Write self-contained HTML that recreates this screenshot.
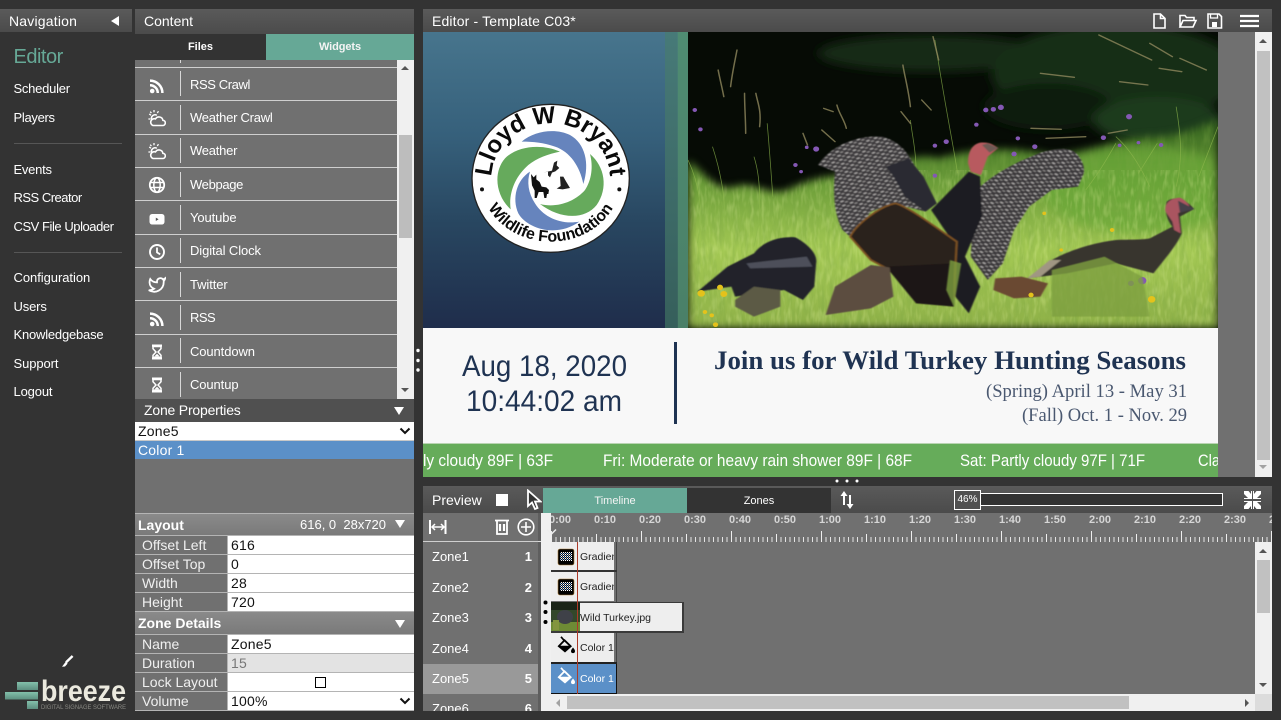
<!DOCTYPE html>
<html><head><meta charset="utf-8"><title>Editor</title>
<style>
html,body{margin:0;padding:0;width:1281px;height:720px;overflow:hidden;background:#333;font-family:"Liberation Sans",sans-serif;color:#fff}
div,span,svg{position:absolute;display:block}
svg text{font-family:"Liberation Sans",sans-serif}
.t{white-space:nowrap;line-height:18px;height:18px}
.hd{background:linear-gradient(#5a5a5a,#4b4b4b);font-size:14px;line-height:23px}
.nav{left:13.5px;font-size:13px;line-height:16px;height:16px;white-space:nowrap;color:#fff;letter-spacing:-.15px}
.ln{left:14px;width:108px;height:1px;background:#565656}
.row{left:135px;width:262px;height:33px;background:#707070;border-bottom:1px solid #cfcfcf;box-sizing:border-box}
.vd{left:180px;width:1px;height:25px;background:#d8d8d8}
.wt{left:190px;font-size:13px;line-height:16px;height:16px;white-space:nowrap;letter-spacing:-.1px}
.ic{left:148px;width:18px;height:18px}
.lb{left:135px;width:92px;height:18px;background:#707070;font-size:14px;line-height:18px;padding-left:7px;box-sizing:border-box;color:#f0f0f0}
.vl{left:228px;width:186px;height:18px;background:#fff;color:#111;font-size:14px;line-height:18px;padding-left:3px;box-sizing:border-box;letter-spacing:.2px}
.z{left:423px;width:115px;height:30px;font-size:13px;line-height:30px;padding-left:9px;box-sizing:border-box;background:#707070}
.z b{position:absolute;right:6px;top:0;font-size:13px}
.bk{left:551px;height:29px;background:#eee;overflow:hidden;color:#222;font-size:10.5px;line-height:29px}
.bk span{white-space:nowrap}
</style></head><body>

<svg width="0" height="0" style="left:0;top:0">
<defs>
<symbol id="rss" viewBox="0 0 18 18"><circle cx="4.2" cy="14" r="2.3" fill="#fff"/><path d="M2 8.2a7.800 7.800 0 0 1 7.800 7.800M2 3.600A12.400 12.400 0 0 1 14.400 16" fill="none" stroke="#fff" stroke-width="2.500"/></symbol>
<symbol id="wx" viewBox="0 0 18 18"><path d="M5 16.500h9.500a2.600 2.600 0 0 0 .4-5.200 4 4 0 0 0-7.400-1.400 3.400 3.400 0 0 0-2.500 6.600z" fill="none" stroke="#fff" stroke-width="1.600"/><path d="M3.600 10.500a3.600 3.600 0 0 1 5.200-4.200" fill="none" stroke="#fff" stroke-width="1.500"/><path d="M6 1v2.200M1.200 5l1.800 1.200M.4 10h2M10.500 2.200 9.300 4M2.200 2.600l1.200 1.500" stroke="#fff" stroke-width="1.300"/></symbol>
<symbol id="gl" viewBox="0 0 18 18"><circle cx="9" cy="9" r="7.200" fill="none" stroke="#fff" stroke-width="1.800"/><ellipse cx="9" cy="9" rx="3.200" ry="7.200" fill="none" stroke="#fff" stroke-width="1.500"/><path d="M2 6.500h14M2 11.500h14" stroke="#fff" stroke-width="1.500"/></symbol>
<symbol id="yt" viewBox="0 0 18 18"><rect x="1.500" y="4" width="15" height="10.500" rx="2.600" fill="#fff"/><path d="M7.800 7.600v3.400l2.800-1.700z" fill="#555"/></symbol>
<symbol id="ck" viewBox="0 0 18 18"><circle cx="9" cy="9" r="7" fill="none" stroke="#fff" stroke-width="1.900"/><path d="M9 4.500V9.400l3.200 2" fill="none" stroke="#fff" stroke-width="1.800"/></symbol>
<symbol id="tw" viewBox="0 0 24 24"><path d="M23 3a10.900 10.900 0 0 1-3 1.600A4.500 4.500 0 0 0 12 7.500v1A10.700 10.700 0 0 1 3 4s-4 9 5 13a11.600 11.600 0 0 1-7 2c9 5 20 0 20-11.500a4.500 4.500 0 0 0-.08-.83A7.700 7.700 0 0 0 23 3z" fill="none" stroke="#fff" stroke-width="2.400"/></symbol>
<symbol id="hg" viewBox="0 0 18 18"><path d="M4 1.500h10v2.200H4zM4 14.300h10v2.200H4z" fill="#fff"/><path d="M5 3.500v2.200L8 9l-3 3.300v2.200h8v-2.200L10 9l3-3.300V3.500z" fill="none" stroke="#fff" stroke-width="1.500"/><path d="M6 13.800 9 10.800l3 3z" fill="#fff"/></symbol>
<symbol id="bkt" viewBox="0 0 20 20"><path fill-rule="evenodd" d="M8.500 3 16 10.300 9 16.500 1.500 10.200zM8.500 5.600 4.400 9.800H12.800z" fill="currentColor"/><path d="M5 .8 8.600 5" stroke="currentColor" stroke-width="1.700" fill="none"/><path d="M17 11.500c1.300 1.700 2 2.600 2 3.600a2 2 0 0 1-4 0c0-1 .8-1.900 2-3.600z" fill="currentColor"/></symbol>
<pattern id="dth" patternUnits="userSpaceOnUse" width="2" height="2"><rect width="2" height="2" fill="#111"/><rect width="1" height="1" fill="#fff"/><rect x="1" y="1" width="1" height="1" fill="#7fa8e0"/></pattern>
<symbol id="grd" viewBox="0 0 18 18"><rect x="1" y="1" width="16" height="16" rx="2" fill="#000" stroke="#a97b35" stroke-width=".6"/><rect x="3" y="4" width="12" height="9" fill="url(#dth)"/></symbol>
<pattern id="wing" patternUnits="userSpaceOnUse" width="22" height="13" patternTransform="rotate(-22)"><rect width="22" height="13" fill="#3c3a3c"/><rect x="1" y="2" width="9" height="4" fill="#b3b0ae"/><rect x="12" y="8" width="8" height="3" fill="#a7a4a2"/></pattern>
<pattern id="wing2" patternUnits="userSpaceOnUse" width="22" height="13" patternTransform="rotate(28)"><rect width="22" height="13" fill="#3a383a"/><rect x="1" y="2" width="9" height="4" fill="#b7b4b2"/><rect x="12" y="8" width="8" height="3" fill="#a09d9b"/></pattern>
<pattern id="tk" patternUnits="userSpaceOnUse" x="551" y="531" width="4.500" height="11"><rect x="0" y="6" width="1" height="5" fill="#e4e4e4"/></pattern>
<pattern id="tk2" patternUnits="userSpaceOnUse" x="551" y="531" width="45" height="11"><rect x="0" y="3" width="1" height="8" fill="#eee"/></pattern>
<pattern id="tk3" patternUnits="userSpaceOnUse" x="551" y="531" width="90" height="11"><rect x="0" y="0" width="1" height="11" fill="#eee"/></pattern>
<filter id="noise" x="0" y="0" width="100%" height="100%"><feTurbulence type="fractalNoise" baseFrequency=".07 .014" numOctaves="3" seed="4"/><feColorMatrix values="0 0 0 0 .2  0 0 0 0 .38  0 0 0 0 .06  1.900 0 0 0 -.7"/></filter>
<filter id="noise2" x="0" y="0" width="100%" height="100%"><feTurbulence type="fractalNoise" baseFrequency=".1 .025" numOctaves="2" seed="9"/><feColorMatrix values="0 0 0 0 .78  0 0 0 0 .9  0 0 0 0 .35  1.800 0 0 0 -.8"/></filter>
<filter id="b1"><feGaussianBlur stdDeviation="1.800"/></filter>
<filter id="b2"><feGaussianBlur stdDeviation="14"/></filter>
<filter id="b3"><feGaussianBlur stdDeviation="12"/></filter>
</defs></svg>

<!-- NAVIGATION -->
<div class="hd" style="left:0;top:9px;width:132px;height:23px"><span class="t" style="left:9px;top:3px;letter-spacing:.2px">Navigation</span></div>
<svg style="left:111px;top:16px" width="9" height="10"><path d="M8 0v10L0 5z" fill="#fff"/></svg>
<div class="nav" style="top:45px;height:24px;line-height:24px;font-size:20px;color:#66a896;letter-spacing:-.5px">Editor</div>
<div class="nav" style="top:81px;letter-spacing:-.25px">Scheduler</div>
<div class="nav" style="top:110px;letter-spacing:-.3px">Players</div>
<div class="ln" style="top:143px"></div>
<div class="nav" style="top:162px;letter-spacing:-.25px">Events</div>
<div class="nav" style="top:190px;letter-spacing:-.5px">RSS Creator</div>
<div class="nav" style="top:219px;letter-spacing:-.45px">CSV File Uploader</div>
<div class="ln" style="top:252px"></div>
<div class="nav" style="top:270px;letter-spacing:-.05px">Configuration</div>
<div class="nav" style="top:299px">Users</div>
<div class="nav" style="top:327px;letter-spacing:-.2px">Knowledgebase</div>
<div class="nav" style="top:356px;letter-spacing:-.1px">Support</div>
<div class="nav" style="top:384px">Logout</div>
<svg style="left:60px;top:655px" width="14" height="13"><path d="M12.600 1 6 7.400" stroke="#fff" stroke-width="2.400"/><path d="M5.800 6.600 7.600 8.600 5 11.500 2 11.800z" fill="#fff"/></svg>
<svg style="left:0;top:675px" width="135" height="40" viewBox="0 675 135 40">
<defs><linearGradient id="lg" x1="0" y1="0" x2="0" y2="1"><stop offset="0" stop-color="#83c0ab"/><stop offset="1" stop-color="#5d8f80"/></linearGradient></defs>
<rect x="17" y="682" width="21" height="8" fill="url(#lg)"/><rect x="5" y="692" width="33" height="7.500" fill="url(#lg)"/><rect x="27" y="701" width="11" height="8" fill="url(#lg)"/>
<text x="41" y="701" font-size="30" font-weight="bold" fill="#ebe9de" textLength="85" lengthAdjust="spacingAndGlyphs">breeze</text>
<text x="41" y="709" font-size="6.500" fill="#8a8a84" textLength="85" lengthAdjust="spacingAndGlyphs">DIGITAL SIGNAGE SOFTWARE</text>
</svg>

<!-- CONTENT -->
<div class="hd" style="left:135px;top:9px;width:279px;height:25px"><span class="t" style="left:9px;top:3px">Content</span></div>
<div style="left:135px;top:34px;width:131px;height:26px;background:#333;font-size:11px;font-weight:bold;line-height:26px;text-align:center">Files</div>
<div style="left:266px;top:34px;width:148px;height:26px;background:#66a896;font-size:11px;font-weight:bold;line-height:26px;text-align:center;color:#f4f4f4;letter-spacing:-.1px">Widgets</div>

<div style="left:135px;top:60px;width:262px;height:339px;background:#707070"></div>
<div class="row" style="top:60px;height:8px"></div>
<div class="vd" style="top:60px;height:3px"></div>
<div class="row" style="top:68px"></div><div class="row" style="top:101px;height:34px"></div><div class="row" style="top:135px"></div><div class="row" style="top:168px"></div><div class="row" style="top:201px;height:34px"></div><div class="row" style="top:235px"></div><div class="row" style="top:268px"></div><div class="row" style="top:301px;height:34px"></div><div class="row" style="top:335px"></div>
<div class="vd" style="top:71px"></div><div class="vd" style="top:105px"></div><div class="vd" style="top:138px"></div><div class="vd" style="top:172px"></div><div class="vd" style="top:205px"></div><div class="vd" style="top:238px"></div><div class="vd" style="top:272px"></div><div class="vd" style="top:305px"></div><div class="vd" style="top:338px"></div><div class="vd" style="top:372px"></div>
<svg class="ic" style="top:77px"><use href="#rss"/></svg><div class="wt" style="top:77px;letter-spacing:-.4px">RSS Crawl</div>
<svg class="ic" style="top:109px"><use href="#wx"/></svg><div class="wt" style="top:110px;letter-spacing:-.25px">Weather Crawl</div>
<svg class="ic" style="top:142px"><use href="#wx"/></svg><div class="wt" style="top:143px;letter-spacing:-.25px">Weather</div>
<svg class="ic" style="top:176px"><use href="#gl"/></svg><div class="wt" style="top:177px;letter-spacing:-.35px">Webpage</div>
<svg class="ic" style="top:210px"><use href="#yt"/></svg><div class="wt" style="top:210px">Youtube</div>
<svg class="ic" style="top:243px"><use href="#ck"/></svg><div class="wt" style="top:243px">Digital Clock</div>
<svg class="ic" style="top:276px;left:148px"><use href="#tw"/></svg><div class="wt" style="top:277px">Twitter</div>
<svg class="ic" style="top:310px"><use href="#rss"/></svg><div class="wt" style="top:310px;letter-spacing:-.5px">RSS</div>
<svg class="ic" style="top:343px"><use href="#hg"/></svg><div class="wt" style="top:344px">Countdown</div>
<svg class="ic" style="top:376px"><use href="#hg"/></svg><div class="wt" style="top:377px">Countup</div>

<div style="left:397px;top:60px;width:17px;height:339px;background:#f0f0f0"></div>
<div style="left:399px;top:135px;width:13px;height:103px;background:#bdbdbd"></div>
<svg style="left:401px;top:66px" width="8" height="5"><path d="M0 4 4 0l4 4z" fill="#555"/></svg>
<svg style="left:401px;top:388px" width="8" height="5"><path d="M0 0h8L4 4z" fill="#555"/></svg>

<div style="left:135px;top:399px;width:279px;height:23px;background:#505050;font-size:14px;line-height:23px"><span class="t" style="left:9px;top:2px;letter-spacing:-.2px">Zone Properties</span></div>
<svg style="left:394px;top:407px" width="10" height="8"><path d="M0 0h10L5 8z" fill="#fff"/></svg>
<div style="left:135px;top:422px;width:279px;height:18px;background:#fff;color:#111;font-size:14px;line-height:18px;padding-left:3px;box-sizing:border-box;letter-spacing:.2px">Zone5</div>
<svg style="left:399px;top:427px" width="12" height="9"><path d="M1.500 1.500 6 6l4.500-4.500" fill="none" stroke="#111" stroke-width="2"/></svg>
<div style="left:135px;top:440px;width:279px;height:1px;background:#c8c8c8"></div>
<div style="left:135px;top:441px;width:279px;height:18px;background:#5b90c8;color:#fff;font-size:14px;line-height:18px;padding-left:3px;box-sizing:border-box;letter-spacing:.2px">Color 1</div>
<div style="left:135px;top:459px;width:279px;height:54px;background:#707070"></div>

<div style="left:135px;top:513px;width:279px;height:198px;background:#b4b4b4"></div>
<div style="left:135px;top:514px;width:279px;height:21px;background:linear-gradient(#8a8a8a,#7a7a7a);font-size:14px;font-weight:bold;line-height:22px;padding-left:3px;box-sizing:border-box">Layout</div>
<div class="t" style="left:300px;top:516px;font-size:13px;white-space:pre">616, 0 &nbsp;28x720</div>
<svg style="left:395px;top:520px" width="10" height="8"><path d="M0 0h10L5 8z" fill="#fff"/></svg>
<div class="lb" style="top:536px">Offset Left</div><div class="vl" style="top:536px">616</div>
<div class="lb" style="top:555px">Offset Top</div><div class="vl" style="top:555px">0</div>
<div class="lb" style="top:574px">Width</div><div class="vl" style="top:574px">28</div>
<div class="lb" style="top:593px">Height</div><div class="vl" style="top:593px">720</div>
<div style="left:135px;top:612px;width:279px;height:22px;background:linear-gradient(#8a8a8a,#7a7a7a);font-size:14px;font-weight:bold;line-height:22px;padding-left:3px;box-sizing:border-box">Zone Details</div>
<svg style="left:395px;top:620px" width="10" height="8"><path d="M0 0h10L5 8z" fill="#fff"/></svg>
<div class="lb" style="top:635px">Name</div><div class="vl" style="top:635px">Zone5</div>
<div class="lb" style="top:654px">Duration</div><div class="vl" style="top:654px;background:#e3e3e3;color:#777">15</div>
<div class="lb" style="top:673px">Lock Layout</div><div class="vl" style="top:673px"></div>
<div style="left:315px;top:677px;width:11px;height:11px;border:1px solid #000;background:#fff;box-sizing:border-box"></div>
<div class="lb" style="top:692px">Volume</div><div class="vl" style="top:692px">100%</div>
<svg style="left:399px;top:697px" width="12" height="9"><path d="M1.500 1.500 6 6l4.500-4.500" fill="none" stroke="#111" stroke-width="2"/></svg>

<!-- splitter dots -->
<svg style="left:415px;top:346px" width="6" height="28"><circle cx="3" cy="4.500" r="1.700" fill="#fff"/><circle cx="3" cy="14.500" r="1.700" fill="#fff"/><circle cx="3" cy="24" r="1.700" fill="#fff"/></svg>
<svg style="left:833px;top:478px" width="28" height="6"><circle cx="4" cy="3" r="1.500" fill="#fff"/><circle cx="14" cy="3" r="1.500" fill="#fff"/><circle cx="24" cy="3" r="1.500" fill="#fff"/></svg>

<!-- EDITOR -->
<div class="hd" style="left:423px;top:9px;width:849px;height:23px"><span class="t" style="left:9px;top:3px;letter-spacing:.15px">Editor - Template C03*</span></div>
<svg style="left:1150px;top:11px" width="115" height="20" fill="none" stroke="#fff" stroke-width="1.600">
<path d="M4 3h6.500L15 7.500V17H4z M10.500 3v4.500H15" />
<path d="M30 16V4.500h5l1.500 2H44V9 M30 16l3-6.500h13L43 16z"/>
<path d="M58 3h11l2.500 2.500V17H58z"/><path d="M60.500 3v4h7V3" stroke-width="1.300"/><rect x="62" y="11" width="5" height="5" fill="#fff" stroke="none"/>
<path d="M90 5h19M90 10h19M90 15h19" stroke-width="2.200"/>
</svg>
<div style="left:423px;top:32px;width:832px;height:445px;background:#707070"></div>

<!-- Left gradient + logo -->
<svg style="left:423px;top:32px" width="265" height="296" viewBox="9 6 795 888">
<defs><linearGradient id="bg" x1="0" y1="0" x2="0" y2="1"><stop offset="0" stop-color="#47758d"/><stop offset=".35" stop-color="#36607b"/><stop offset=".65" stop-color="#284660"/><stop offset="1" stop-color="#1f2d4b"/></linearGradient>
<linearGradient id="g1" x1="0" y1="0" x2="0" y2="1"><stop offset="0" stop-color="#477a78"/><stop offset="1" stop-color="#365f5b"/></linearGradient>
<linearGradient id="g2" x1="0" y1="0" x2="0" y2="1"><stop offset="0" stop-color="#4f8c72"/><stop offset="1" stop-color="#4a8068"/></linearGradient>
<path id="arcT" d="M214 445A178 165 0 0 1 570 445"/>
<path id="arcB" d="M180 445A212 190 0 0 0 604 445"/>
</defs>
<rect x="9" y="6" width="795" height="888" fill="url(#bg)"/>
<rect x="735" y="6" width="38" height="888" fill="url(#g1)"/><rect x="773" y="6" width="31" height="888" fill="url(#g2)"/>
<ellipse cx="392" cy="445" rx="236" ry="222" fill="#fff" stroke="#222" stroke-width="4"/>
<path d="M305 335C345 300 410 295 450 315C495 340 510 400 490 462C480 410 450 365 405 350C370 338 340 335 305 335z" fill="#6684bd"/>
<path d="M330 425C290 450 275 505 295 550C320 595 410 625 478 575C420 585 370 560 345 520C325 490 320 455 330 425z" fill="#6684bd"/>
<path d="M420 365C370 342 295 345 255 385C220 425 225 495 272 538C265 490 285 440 325 405C350 385 385 372 420 365z" fill="#66aa5c"/>
<path d="M510 372C555 410 565 475 530 525C495 570 420 568 360 522C410 535 465 515 495 480C515 450 520 410 510 372z" fill="#66aa5c"/>
<path d="M333 432l8 10 8-8 0 14 10 8 6 14 14 2 8 8-2 12-4 0-2 12-6 0-3-18-14 0-6 18-6 0 0-22-8-16-2-22z" fill="#111"/>
<path d="M370 428l26-6 6-24 10-6-2 14 8 8-12 10-10 4-6 14-6-6 0-12z" fill="#222"/>
<path d="M420 440l10 0 8 14 12 20-22 4-18-2 12-8z" fill="#222"/>
<text font-size="72" font-weight="bold" fill="#0a0a0a"><textPath href="#arcT" startOffset="50%" text-anchor="middle">Lloyd W Bryant</textPath></text>
<text font-size="48" font-weight="bold" fill="#0a0a0a"><textPath href="#arcB" startOffset="50%" text-anchor="middle">Wildlife Foundation</textPath></text>
<circle cx="186" cy="478" r="6" fill="#111"/><circle cx="598" cy="478" r="6" fill="#111"/>
</svg>

<!-- Photo -->
<svg style="left:688px;top:32px" width="530" height="296" viewBox="-5 6 1406 888" preserveAspectRatio="none">
<defs><clipPath id="pc"><rect x="-5" y="6" width="1406" height="888"/></clipPath>
<linearGradient id="gr" gradientUnits="userSpaceOnUse" x1="0" y1="270" x2="0" y2="894"><stop offset="0" stop-color="#35641f"/><stop offset=".3" stop-color="#6a9c38"/><stop offset=".62" stop-color="#a4c954"/><stop offset="1" stop-color="#8fb148"/></linearGradient>
<mask id="gm" maskUnits="userSpaceOnUse" x="-5" y="6" width="1406" height="888"><path d="M-5 390C30 420 70 490 120 470C170 450 200 500 260 480C310 450 380 430 420 440C520 420 590 360 660 385C760 350 860 350 960 375C1040 370 1120 330 1210 320C1280 320 1340 300 1401 265V894H-5z" fill="#fff" filter="url(#b3)"/></mask></defs>
<g clip-path="url(#pc)">
<rect x="-5" y="6" width="1406" height="888" fill="#060b05"/>
<g filter="url(#b2)">
<ellipse cx="640" cy="70" rx="300" ry="55" fill="#182b15"/>
<ellipse cx="1130" cy="130" rx="330" ry="150" fill="#182f17"/>
<ellipse cx="950" cy="230" rx="170" ry="70" fill="#0e1b0c"/>
<ellipse cx="1240" cy="270" rx="170" ry="70" fill="#1c3a1a"/>
</g>
<g mask="url(#gm)">
<rect x="-5" y="200" width="1406" height="694" fill="url(#gr)"/>
<ellipse cx="1200" cy="480" rx="260" ry="130" fill="#6aa838" opacity=".75" filter="url(#b2)"/>
<rect x="-5" y="200" width="1406" height="694" fill="#000" filter="url(#noise)" opacity=".4"/>
<rect x="-5" y="420" width="1406" height="474" filter="url(#noise2)" opacity=".4"/>
</g>
<g fill="none" stroke="#8fb84d" stroke-width="2" opacity=".7">
<path d="M20 640C40 540 20 450 -5 390M90 620C100 520 80 420 60 350M170 650C190 560 190 450 170 380M220 500C215 420 210 340 205 280"/>
<path d="M1130 320C1170 360 1200 420 1220 470M1190 430L1240 340M1290 470C1310 380 1300 300 1290 230M1350 440L1401 290M1050 480C1090 420 1110 380 1130 340M600 420C600 360 590 320 585 270M710 430C700 350 680 250 650 30"/>
</g>
<g fill="none" stroke="#8f875c" stroke-width="4" stroke-linecap="round" opacity=".8">
<path d="M125 60C120 90 112 130 108 170M75 120C80 150 85 170 90 200M145 190C145 230 148 270 148 310M175 190C180 220 190 240 185 290"/>
<path d="M355 235L380 245M390 225C395 250 410 270 415 295M300 310L312 345M350 300L385 335M565 105C570 140 580 180 585 230M615 210L640 240M645 20L660 90M560 245L585 280"/>
<path d="M1085 15L1225 90M1220 40L1280 80M1300 85L1370 120M930 130L1020 142M1140 155L1215 165M1245 115L1305 125M905 295L985 298M945 325L1050 320M1110 310L1160 300"/>
</g>
<g fill="#8458b4">
<circle cx="785" cy="240" r="7"/><circle cx="805" cy="238" r="7"/><circle cx="825" cy="232" r="8"/><circle cx="760" cy="284" r="6"/><circle cx="870" cy="325" r="6"/><circle cx="335" cy="357" r="8"/><circle cx="310" cy="352" r="5"/><circle cx="13" cy="240" r="6"/><circle cx="28" cy="298" r="6"/><circle cx="680" cy="335" r="7"/><circle cx="650" cy="347" r="6"/><circle cx="1165" cy="260" r="8"/><circle cx="1097" cy="323" r="7"/><circle cx="1250" cy="345" r="6"/><circle cx="280" cy="405" r="6"/><circle cx="295" cy="425" r="5"/><circle cx="650" cy="437" r="6"/><circle cx="860" cy="372" r="7"/><circle cx="915" cy="350" r="7"/><circle cx="1140" cy="346" r="5"/><circle cx="1190" cy="338" r="5"/><circle cx="1200" cy="752" r="11"/><circle cx="1170" cy="760" r="8"/><circle cx="185" cy="820" r="8"/>
</g>
<g filter="url(#b1)">
<!-- main turkey -->
<path d="M340 405C350 385 370 365 390 352C420 330 470 315 510 320C545 330 570 355 585 385L655 520 625 545 540 520 480 545 430 625 405 600C385 560 378 500 385 425z" fill="url(#wing)"/>
<path d="M770 470C810 430 860 400 905 380C950 355 1000 350 1020 365C1040 385 1048 410 1045 430L1030 470 960 480 900 530 860 600 830 700 790 750 745 680 750 560z" fill="url(#wing2)"/>
<path d="M520 410L580 385 620 440 655 520 625 545 570 500 540 440z" fill="#2b2c30"/>
<path d="M640 540L740 425 770 440 775 560 730 680 770 770 740 850 690 780 700 640z" fill="#1c1c20"/>
<path d="M425 620C440 585 500 530 545 520C580 530 650 590 708 635L700 800 610 800 530 720 480 690z" fill="#2a211b" stroke="#7e5223" stroke-width="5"/>
<path d="M520 710L700 700 700 830 600 820z" fill="#1c1713"/>
<path d="M738 400C738 370 745 345 770 338C795 335 805 345 818 354L790 380 772 435 745 425z" fill="#b85a5f"/>
<path d="M775 345L790 340 818 354 795 368z" fill="#6e5a55"/>
<!-- right turkey -->
<path d="M895 745L960 690C1000 665 1060 640 1130 630C1170 628 1200 630 1220 625L1280 590C1265 570 1258 540 1265 515C1280 500 1310 500 1338 537L1300 560 1305 610C1290 650 1250 700 1230 730L1130 700 1000 730z" fill="#39352f"/>
<path d="M1262 545C1258 525 1270 505 1300 503 1315 510 1325 525 1325 530L1295 550 1302 610 1285 600 1280 575z" fill="#aa5560"/>
<path d="M1295 512 1338 537 1300 548z" fill="#44404a"/>
<path d="M895 745 955 690 985 690 930 740z" fill="#a09683"/>
<path d="M810 745L880 740 950 760 930 800 860 805 805 780z" fill="#6a4a30"/>
<!-- left turkey -->
<path d="M20 785L100 710 170 670C190 640 230 618 280 622C310 640 340 670 335 700L330 770 300 810 250 780 180 790 120 800 110 770z" fill="#22242c"/>
<path d="M120 810L170 770 240 780 240 830 170 860 120 830z" fill="#5b5a45"/>
<path d="M150 700L310 680 325 710 160 715z" fill="#4e505a"/>
<path d="M360 855L385 770 480 705 530 712 540 800 480 835z" fill="#5b4d3f"/>
</g>
<g fill="#7ea03f" opacity=".8" filter="url(#b1)">
<path d="M960 720L1100 680 1200 740 1220 860 960 860z"/><path d="M690 690L720 700 700 830 680 780z" />
</g>
<g fill="#e4c21b">
<circle cx="30" cy="790" r="10"/><circle cx="80" cy="772" r="8"/><circle cx="90" cy="792" r="9"/><circle cx="40" cy="846" r="6"/><circle cx="58" cy="856" r="6"/><circle cx="68" cy="884" r="7"/><circle cx="1225" cy="808" r="10"/><circle cx="905" cy="795" r="7"/><circle cx="1120" cy="600" r="6"/><circle cx="985" cy="660" r="5"/><circle cx="940" cy="550" r="5"/>
</g>
</g></svg>

<!-- Bottom canvas -->
<svg style="left:423px;top:328px" width="795" height="149" viewBox="423 328 795 149">
<rect x="423" y="328" width="795" height="116" fill="#f8f8f8"/>
<rect x="423" y="443" width="795" height="34" fill="#66ac5a"/><rect x="423" y="443" width="795" height="1" fill="#b9d4b2"/>
<text x="462" y="376" font-size="30" fill="#1f3352" textLength="165" lengthAdjust="spacingAndGlyphs">Aug 18, 2020</text>
<text x="466" y="411" font-size="30" fill="#1f3352" textLength="156" lengthAdjust="spacingAndGlyphs">10:44:02 am</text>
<rect x="674" y="342" width="3" height="82" fill="#1f3352"/>
<text x="714" y="369" font-size="26" font-weight="bold" fill="#1f3352" style="font-family:'Liberation Serif',serif" textLength="472" lengthAdjust="spacingAndGlyphs">Join us for Wild Turkey Hunting Seasons</text>
<text x="986" y="397" font-size="19" fill="#4a5870" style="font-family:'Liberation Serif',serif" textLength="201" lengthAdjust="spacingAndGlyphs">(Spring) April 13 - May 31</text>
<text x="1022" y="421" font-size="19" fill="#4a5870" style="font-family:'Liberation Serif',serif" textLength="165" lengthAdjust="spacingAndGlyphs">(Fall) Oct. 1 - Nov. 29</text>
<g font-size="17" fill="#fff">
<text x="423" y="466" textLength="130" lengthAdjust="spacingAndGlyphs">ly cloudy 89F | 63F</text>
<text x="603" y="466" textLength="309" lengthAdjust="spacingAndGlyphs">Fri: Moderate or heavy rain shower 89F | 68F</text>
<text x="960" y="466" textLength="185" lengthAdjust="spacingAndGlyphs">Sat: Partly cloudy 97F | 71F</text>
<text x="1198" y="466" textLength="22" lengthAdjust="spacingAndGlyphs">Cla</text>
</g></svg>

<!-- editor scrollbar -->
<div style="left:1255px;top:32px;width:17px;height:445px;background:#f0f0f0"></div>
<div style="left:1257px;top:51px;width:13px;height:409px;background:#c1c1c1"></div>
<svg style="left:1259px;top:39px" width="8" height="5"><path d="M0 4 4 0l4 4z" fill="#555"/></svg>
<svg style="left:1259px;top:465px" width="8" height="5"><path d="M0 0h8L4 4z" fill="#a3a3a3"/></svg>

<!-- PREVIEW -->
<div class="hd" style="left:423px;top:486px;width:849px;height:27px"><span class="t" style="left:9px;top:5px">Preview</span></div>
<div style="left:496px;top:494px;width:12px;height:12px;background:#fff"></div>
<svg style="left:526px;top:489px" width="16" height="22"><path d="M2 1.500V17l4-3.500L9 20l2.500-1L9 12.500h5.500z" fill="#333" stroke="#fff" stroke-width="1.800"/></svg>
<div style="left:543px;top:488px;width:144px;height:25px;background:#66a896;font-size:11px;line-height:26px;text-align:center;color:#f4f4f4">Timeline</div>
<div style="left:687px;top:488px;width:144px;height:25px;background:#333;font-size:11px;line-height:26px;text-align:center">Zones</div>
<svg style="left:840px;top:490px" width="14" height="20" fill="#fff"><path d="M4 1 7.500 6H5v9H3V6H.5z"/><path d="M9 5h2v9h2.500L10 19l-3.500-5H9z"/></svg>
<div style="left:954px;top:493px;width:269px;height:13px;background:#333;border:1px solid #fff;box-sizing:border-box"></div>
<div style="left:954px;top:490px;width:27px;height:20px;background:#505050;border:1px solid #fff;box-sizing:border-box;font-size:10px;line-height:18px;text-align:center">46%</div>
<svg style="left:1244px;top:491px" width="17" height="18" fill="#fff"><path d="M0 0 4.500 0 7 3V0h1v8H0V7h4L0 3zM17 0h-4.500L10 3V0H9v8h8V7h-4l4-4zM0 18h4.500L7 15v3h1v-8H0v1h4L0 15zM17 18h-4.500L10 15v3H9v-8h8v1h-4l4 4z"/></svg>

<!-- zone list -->
<div style="left:423px;top:513px;width:115px;height:198px;background:#707070"></div>
<div style="left:423px;top:541px;width:115px;height:1px;background:#cfcfcf"></div>
<svg style="left:429px;top:519px" width="18" height="16" fill="none" stroke="#fff" stroke-width="1.500"><path d="M1 1v14M16.500 1v14" stroke-width="2"/><path d="M3 8h12"/><path d="M6 5 3 8l3 3M12 5l3 3-3 3"/></svg>
<svg style="left:494px;top:518px" width="16" height="17" fill="none" stroke="#fff" stroke-width="1.800"><path d="M1 2.500h14M3 3v13h10V3"/><path d="M6 6v7M10 6v7" stroke-width="2.200"/></svg>
<svg style="left:517px;top:518px" width="18" height="18" fill="none" stroke="#fff" stroke-width="1.600"><circle cx="9" cy="9" r="7.800"/><path d="M9 4v10M4 9h10"/></svg>
<div class="z" style="top:542px">Zone1<b>1</b></div>
<div class="z" style="top:572px;height:31px;line-height:31px">Zone2<b>2</b></div>
<div class="z" style="top:603px">Zone3<b>3</b></div>
<div class="z" style="top:633px;height:31px;line-height:31px">Zone4<b>4</b></div>
<div class="z" style="top:664px;background:#999">Zone5<b>5</b></div>
<div class="z" style="top:694px;height:17px;overflow:hidden">Zone6<b>6</b></div>
<div style="left:538px;top:513px;width:3px;height:198px;background:#5e5e5e"></div>
<div style="left:541px;top:513px;width:10px;height:198px;background:#f0f0f0"></div>
<div style="left:538px;top:541px;width:3px;height:1px;background:#ddd"></div>

<!-- ruler -->
<svg style="left:551px;top:513px" width="721" height="29" viewBox="551 513 721 29">
<rect x="551" y="513" width="721" height="29" fill="#707070"/>
<rect x="551" y="531" width="721" height="11" fill="url(#tk)"/><rect x="551" y="531" width="721" height="11" fill="url(#tk2)"/><rect x="551" y="531" width="721" height="11" fill="url(#tk3)"/>
<g font-size="11" font-weight="bold" fill="#d6d6d6" text-anchor="middle">
<text x="560" y="523">0:00</text><text x="605" y="523">0:10</text><text x="650" y="523">0:20</text><text x="695" y="523">0:30</text><text x="740" y="523">0:40</text><text x="785" y="523">0:50</text><text x="830" y="523">1:00</text><text x="875" y="523">1:10</text><text x="920" y="523">1:20</text><text x="965" y="523">1:30</text><text x="1010" y="523">1:40</text><text x="1055" y="523">1:50</text><text x="1100" y="523">2:00</text><text x="1145" y="523">2:10</text><text x="1190" y="523">2:20</text><text x="1235" y="523">2:30</text><text x="1280" y="523">2:40</text>
</g></svg>
<svg style="left:546px;top:527px" width="14" height="10"><path d="M1 2.500 5.500 7 10 2.500" fill="none" stroke="#eee" stroke-width="1.500"/></svg>

<!-- timeline -->
<div style="left:551px;top:542px;width:704px;height:152px;background:#707070"></div>
<div class="bk" style="top:542px;width:63px"><span style="left:29px;top:1px">Gradient</span></div>
<div style="left:616px;top:542px;width:1px;height:30px;background:#444"></div><div style="left:551px;top:570px;width:66px;height:2px;background:#333"></div>
<div class="bk" style="top:572px;width:63px"><span style="left:29px;top:1px">Gradient</span></div>
<div style="left:616px;top:572px;width:1px;height:30px;background:#444"></div>
<svg style="left:557px;top:548px" width="18" height="18"><use href="#grd"/></svg>
<svg style="left:557px;top:578px" width="18" height="18"><use href="#grd"/></svg>
<div style="left:551px;top:602px;width:133px;height:31px;background:#eee;border:1px solid #3a3a3a;border-left:0;border-right-width:2px;border-bottom-width:2px;box-sizing:border-box;color:#222;font-size:10.5px;line-height:29px"><span style="left:29px;top:1px;white-space:nowrap">Wild Turkey.jpg</span></div>
<svg style="left:551px;top:602px" width="29" height="29" viewBox="0 0 29 29"><rect width="29" height="29" fill="#33482a"/><rect y="0" width="29" height="8" fill="#1a2417"/><rect y="20" width="29" height="9" fill="#6e8b35"/><ellipse cx="14" cy="15" rx="8" ry="7" fill="#3f4148"/><rect x="2" y="18" width="6" height="10" fill="#83953f"/></svg>
<div class="bk" style="top:633px;width:63px;height:30px;line-height:30px"><span style="left:29px;top:0">Color 1</span></div>
<div style="left:616px;top:633px;width:1px;height:31px;background:#444"></div><div style="left:551px;top:662px;width:66px;height:2px;background:#222"></div>
<svg style="left:556px;top:636px;color:#000" width="20" height="20"><use href="#bkt"/></svg>
<div class="bk" style="top:664px;width:66px;height:30px;background:#5b90c8;color:#fff;border:1px solid #111;border-width:0 1px 1px 0;box-sizing:border-box;line-height:29px"><span style="left:29px;top:1px">Color 1</span></div>
<svg style="left:556px;top:667px;color:#fff" width="20" height="20"><use href="#bkt"/></svg>
<div style="left:577px;top:542px;width:1px;height:152px;background:#ad3a28"></div>
<svg style="left:543px;top:600px" width="5" height="24"><circle cx="2.500" cy="2.500" r="2" fill="#000"/><circle cx="2.500" cy="12" r="2" fill="#000"/><circle cx="2.500" cy="22" r="2" fill="#000"/></svg>

<!-- scrollbars -->
<div style="left:551px;top:694px;width:704px;height:17px;background:#f0f0f0"></div>
<div style="left:567px;top:696px;width:562px;height:13px;background:#c1c1c1"></div>
<svg style="left:556px;top:699px" width="5" height="8"><path d="M4 0v8L0 4z" fill="#a3a3a3"/></svg>
<svg style="left:1245px;top:699px" width="5" height="8"><path d="M0 0v8l4-4z" fill="#555"/></svg>
<div style="left:1255px;top:542px;width:17px;height:152px;background:#f0f0f0"></div>
<div style="left:1257px;top:560px;width:13px;height:53px;background:#c1c1c1"></div>
<svg style="left:1259px;top:549px" width="8" height="5"><path d="M0 4 4 0l4 4z" fill="#555"/></svg>
<svg style="left:1259px;top:683px" width="8" height="5"><path d="M0 0h8L4 4z" fill="#555"/></svg>
<div style="left:1255px;top:694px;width:17px;height:17px;background:#dcdcdc"></div>
</body></html>
